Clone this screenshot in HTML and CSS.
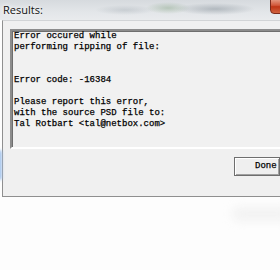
FILE: index.html
```html
<!DOCTYPE html>
<html>
<head>
<meta charset="utf-8">
<link rel="stylesheet" href="styles.css">
</head>
<body>
<div class="screen">
  <div class="titlebar">
    <span class="title">Results:</span>
    <div class="close"></div>
  </div>
  <div class="window">
    <div class="textbox"><pre class="msg">Error occured while
performing ripping of file:


Error code: -16384

Please report this error,
with the source PSD file to:
Tal Rotbart &lt;tal@netbox.com&gt;</pre></div>
    <div class="actions">
      <button class="done">Done</button>
    </div>
  </div>
  <div class="desktop">
    <div class="blob"></div>
  </div>
  <div class="edge"></div>
</div>
</body>
</html>
```
FILE: styles.css
```css
html, body {
  margin: 0;
  padding: 0;
  background: #ffffff;
}
.screen {
  position: relative;
  width: 280px;
  height: 270px;
  overflow: hidden;
  background: #fdfdfd;
}
.titlebar {
  position: relative;
  height: 20px;
  background:
    radial-gradient(ellipse 22px 6px at 168px 8px, rgba(150,175,150,0.55), rgba(150,175,150,0) 100%),
    radial-gradient(ellipse 40px 6px at 215px 9px, rgba(140,150,158,0.55), rgba(140,150,158,0) 100%),
    radial-gradient(ellipse 30px 5px at 125px 10px, rgba(170,178,185,0.45), rgba(170,178,185,0) 100%),
    linear-gradient(#d6dade, #e3e6e9 60%, #e9ebed);
}
.title {
  display: block;
  padding: 1px 0 0 3px;
  font-family: "Open Sans", "Noto Sans", sans-serif;
  font-size: 11px;
  line-height: 17px;
  color: #111;
  text-shadow: 0 0 4px #fff, 0 0 6px #fff;
}
.close {
  position: absolute;
  left: 270px;
  top: -2px;
  width: 30px;
  height: 14px;
  border: 1px solid #7b2b1c;
  border-radius: 0 0 0 4px;
  background: linear-gradient(#e6a08a, #d2593c 45%, #bf3516 55%, #d0623f);
}
.window {
  margin-left: 2px;
  height: 167px;
  border-top: 1px solid #d2d4d6;
  border-left: 1px solid #8f8f8f;
  border-bottom: 1px solid #8f8f8f;
  background: #f0f0f0;
  padding: 8px 0 0 7px;
  box-sizing: content-box;
}
.textbox {
  width: 300px;
  height: 116px;
  border-top: 2px solid #8c8c8c;
  border-left: 2px solid #8c8c8c;
  border-bottom: 2px solid #ffffff;
  border-right: 2px solid #ffffff;
  box-shadow: inset 1px 1px 0 #6e6e6e;
  background: #f1f1f1;
}
.msg {
  margin: 0;
  padding: 0 0 0 2px;
  font-family: "Liberation Mono", "DejaVu Sans Mono", monospace;
  font-size: 9px;
  line-height: 11px;
  color: #000;
  -webkit-text-stroke: 0.25px #000;
}
.actions {
  display: flex;
  padding: 8px 0 0 224px;
}
.done {
  width: 64px;
  height: 19px;
  margin: 0;
  padding: 0;
  text-align: left;
  text-indent: 20px;
  border: 1px solid #6e6e6e;
  box-shadow: inset 1px 1px 0 #ffffff, inset -1px -1px 0 #a0a0a0;
  background: #efefef;
  font-family: "Liberation Mono", "DejaVu Sans Mono", monospace;
  font-size: 9px;
  line-height: 17px;
  color: #000;
  -webkit-text-stroke: 0.25px #000;
}
.desktop {
  position: relative;
  height: 81px;
  background: #fdfdfd;
}
.blob {
  position: absolute;
  left: 232px;
  top: 10px;
  width: 60px;
  height: 14px;
  border-radius: 10px;
  background: #f2f2f2;
  filter: blur(5px);
}
.edge {
  position: absolute;
  left: -3px;
  top: 150px;
  width: 5px;
  height: 30px;
  border-radius: 3px;
  background: #a6c5ec;
  filter: blur(1.5px);
}
```
